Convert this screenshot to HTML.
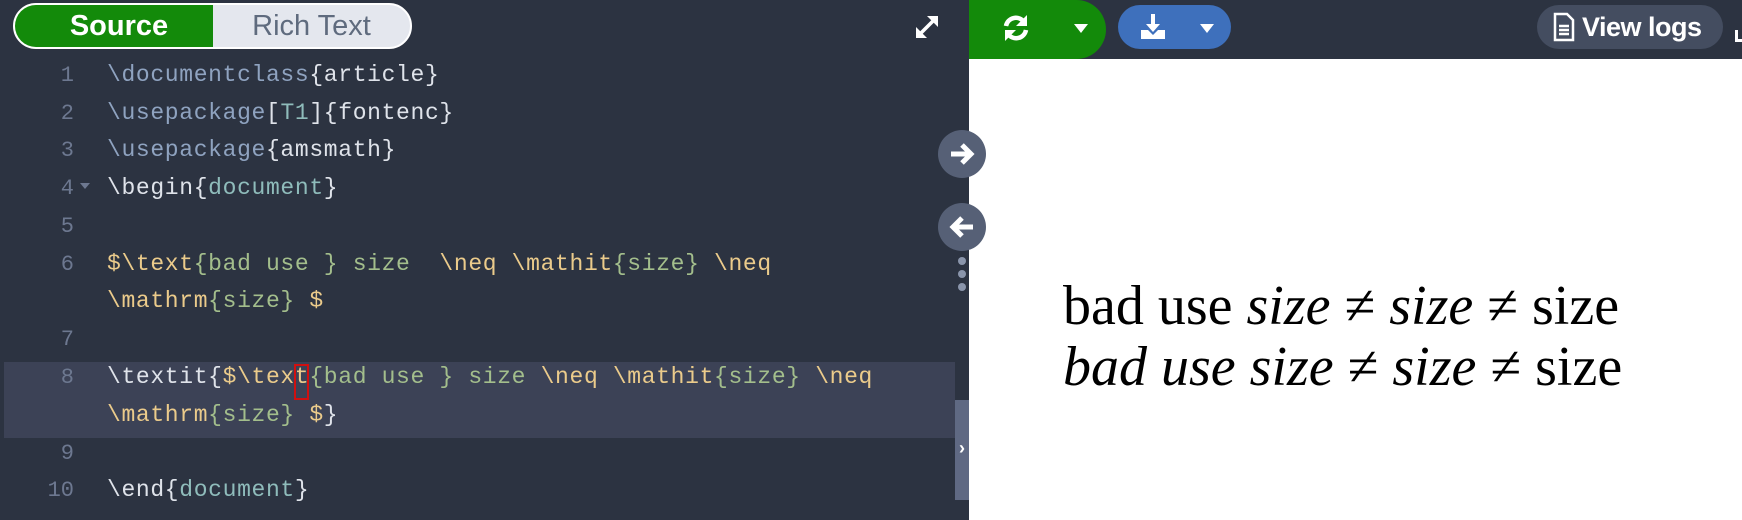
<!DOCTYPE html>
<html><head><meta charset="utf-8"><style>
*{margin:0;padding:0;box-sizing:border-box}
body{width:1742px;height:520px;overflow:hidden;background:#2c3341;position:relative;font-family:"Liberation Sans",sans-serif}
.abs{position:absolute}
.code{font-family:"Liberation Mono",monospace;font-size:23px;color:#dfe3ea;white-space:pre;letter-spacing:0.65px}
.ln{position:absolute;left:0;width:74px;text-align:right;font-family:"Liberation Mono",monospace;font-size:22px;color:#6d7890;letter-spacing:0}
.cl{position:absolute;left:107px}
.c{color:#8fa3c0}.t{color:#8fbcbb}.y{color:#ebcb8b}.g{color:#a3be8c}
.math{font-family:"Liberation Serif",serif;font-size:56px;color:#000;white-space:nowrap}
</style></head><body>
<div class="abs" style="left:13px;top:3px;width:399px;height:46px;border-radius:23px;background:#e4e7ee;border:2px solid #fff"></div>
<div class="abs" style="left:15px;top:5px;width:198px;height:42px;border-radius:21px 0 0 21px;background:#138a0a;color:#fff;font-weight:bold;font-size:29px;line-height:42px;text-align:center;padding-left:10px">Source</div>
<div class="abs" style="left:213px;top:5px;width:197px;height:42px;color:#5f6b7e;font-size:29px;line-height:42px;text-align:center">Rich Text</div>
<svg class="abs" style="left:912px;top:12px" width="30" height="30" viewBox="0 0 30 30"><g stroke="#fff" stroke-width="3.5" fill="none"><path d="M7 23 L23 7"/></g><path d="M15 4 H26 V15Z M4 15 V26 H15Z" fill="#fff"/></svg>
<div class="abs" style="left:4px;top:362px;width:103px;height:76px;background:#3c4256"></div>
<div class="abs" style="left:107px;top:362px;width:848px;height:38px;background:#3c4256"></div>
<div class="abs" style="left:107px;top:400px;width:848px;height:38px;background:#3c4256"></div>
<div class="code">
<div class="ln" style="top:63px">1</div><div class="cl" style="top:62px"><span class="c">\documentclass</span>{article}</div>
<div class="ln" style="top:101px">2</div><div class="cl" style="top:100px"><span class="c">\usepackage</span>[<span class="t">T1</span>]{fontenc}</div>
<div class="ln" style="top:138px">3</div><div class="cl" style="top:137px"><span class="c">\usepackage</span>{amsmath}</div>
<div class="ln" style="top:176px">4</div><div class="abs" style="left:80px;top:183px;border:5px solid transparent;border-top:6px solid #6d7890"></div><div class="cl" style="top:175px">\begin{<span class="t">document</span>}</div>
<div class="ln" style="top:214px">5</div>
<div class="ln" style="top:252px">6</div><div class="cl" style="top:251px"><span class="y">$\text</span><span class="g">{bad use } size  </span><span class="y">\neq \mathit</span><span class="g">{size}</span> <span class="y">\neq</span></div>
<div class="cl" style="top:288px"><span class="y">\mathrm</span><span class="g">{size}</span> <span class="y">$</span></div>
<div class="ln" style="top:327px">7</div>
<div class="ln" style="top:365px">8</div><div class="cl" style="top:364px">\textit{<span class="y">$\text</span><span class="g">{bad use } size </span><span class="y">\neq \mathit</span><span class="g">{size}</span> <span class="y">\neq</span></div>
<div class="cl" style="top:402px"><span class="y">\mathrm</span><span class="g">{size}</span> <span class="y">$</span>}</div>
<div class="ln" style="top:441px">9</div>
<div class="ln" style="top:478px">10</div><div class="cl" style="top:477px">\end{<span class="t">document</span>}</div>
</div>
<div class="abs" style="left:294px;top:364px;width:15px;height:36px;border:2px solid #d01010"></div>
<div class="abs" style="left:955px;top:400px;width:14px;height:100px;background:#5f6983"></div>
<div class="abs" style="left:955px;top:438px;width:14px;color:#fff;font-size:18px;font-weight:bold;text-align:center">›</div>
<div class="abs" style="left:969px;top:59px;width:773px;height:461px;background:#fff"></div>
<div class="abs" style="left:969px;top:0;width:137px;height:59px;background:#138a0a;border-radius:0 30px 30px 0"></div>
<svg class="abs" style="left:1000px;top:12px" width="32" height="32" viewBox="0 0 32 32"><g fill="none" stroke="#fff" stroke-width="4.5"><path d="M6 14 A10 10 0 0 1 24 10"/><path d="M26 18 A10 10 0 0 1 8 22"/></g><path d="M27 3 V14 H16Z M5 29 V18 H16Z" fill="#fff"/></svg>
<div class="abs" style="left:1074px;top:24px;border:7px solid transparent;border-top:9px solid #fff"></div>
<div class="abs" style="left:1118px;top:5px;width:113px;height:44px;border-radius:22px;background:#3e70bc"></div>
<svg class="abs" style="left:1138px;top:12px" width="30" height="30" viewBox="0 0 30 30"><path d="M13 2 H17 V12 H22 L15 20 L8 12 H13Z M3 18 H10 L15 23 L20 18 H27 V27 H3Z" fill="#fff"/></svg>
<div class="abs" style="left:1200px;top:24px;border:7px solid transparent;border-top:9px solid #fff"></div>
<div class="abs" style="left:1537px;top:5px;width:186px;height:44px;border-radius:22px;background:#444d60"></div>
<svg class="abs" style="left:1552px;top:12px" width="24" height="30" viewBox="0 0 24 30"><path d="M3 2 H15 L21 8 V28 H3Z" fill="none" stroke="#fff" stroke-width="2.5"/><path d="M7 14 H17 M7 18 H17 M7 22 H17" stroke="#fff" stroke-width="2.5"/></svg>
<div class="abs" style="left:1582px;top:8px;color:#fff;font-weight:bold;font-size:27px;line-height:38px;letter-spacing:-0.5px">View logs</div>
<div class="abs" style="left:1735px;top:30px;width:7px;height:12px;border-left:3px solid #fff;border-bottom:3px solid #fff"></div>
<div class="abs" style="left:938px;top:130px;width:48px;height:48px;border-radius:24px;background:#566076"></div>
<svg class="abs" style="left:946px;top:138px" width="32" height="32" viewBox="0 0 32 32"><path d="M5 16 H24 M16 7 L25 16 L16 25" fill="none" stroke="#fff" stroke-width="5"/></svg>
<div class="abs" style="left:938px;top:203px;width:48px;height:48px;border-radius:24px;background:#566076"></div>
<svg class="abs" style="left:946px;top:211px" width="32" height="32" viewBox="0 0 32 32"><path d="M27 16 H8 M16 7 L7 16 L16 25" fill="none" stroke="#fff" stroke-width="5"/></svg>
<div class="abs" style="left:958px;top:257px;width:8px;height:8px;border-radius:4px;background:#8a95ab"></div>
<div class="abs" style="left:958px;top:270px;width:8px;height:8px;border-radius:4px;background:#8a95ab"></div>
<div class="abs" style="left:958px;top:283px;width:8px;height:8px;border-radius:4px;background:#8a95ab"></div>
<div class="abs math" style="left:1063px;top:274px">bad use <i>size</i> ≠ <i>size</i> ≠ size</div>
<div class="abs math" style="left:1063px;top:335px"><i>bad use size</i> ≠ <i>size</i> ≠ size</div>
</body></html>
